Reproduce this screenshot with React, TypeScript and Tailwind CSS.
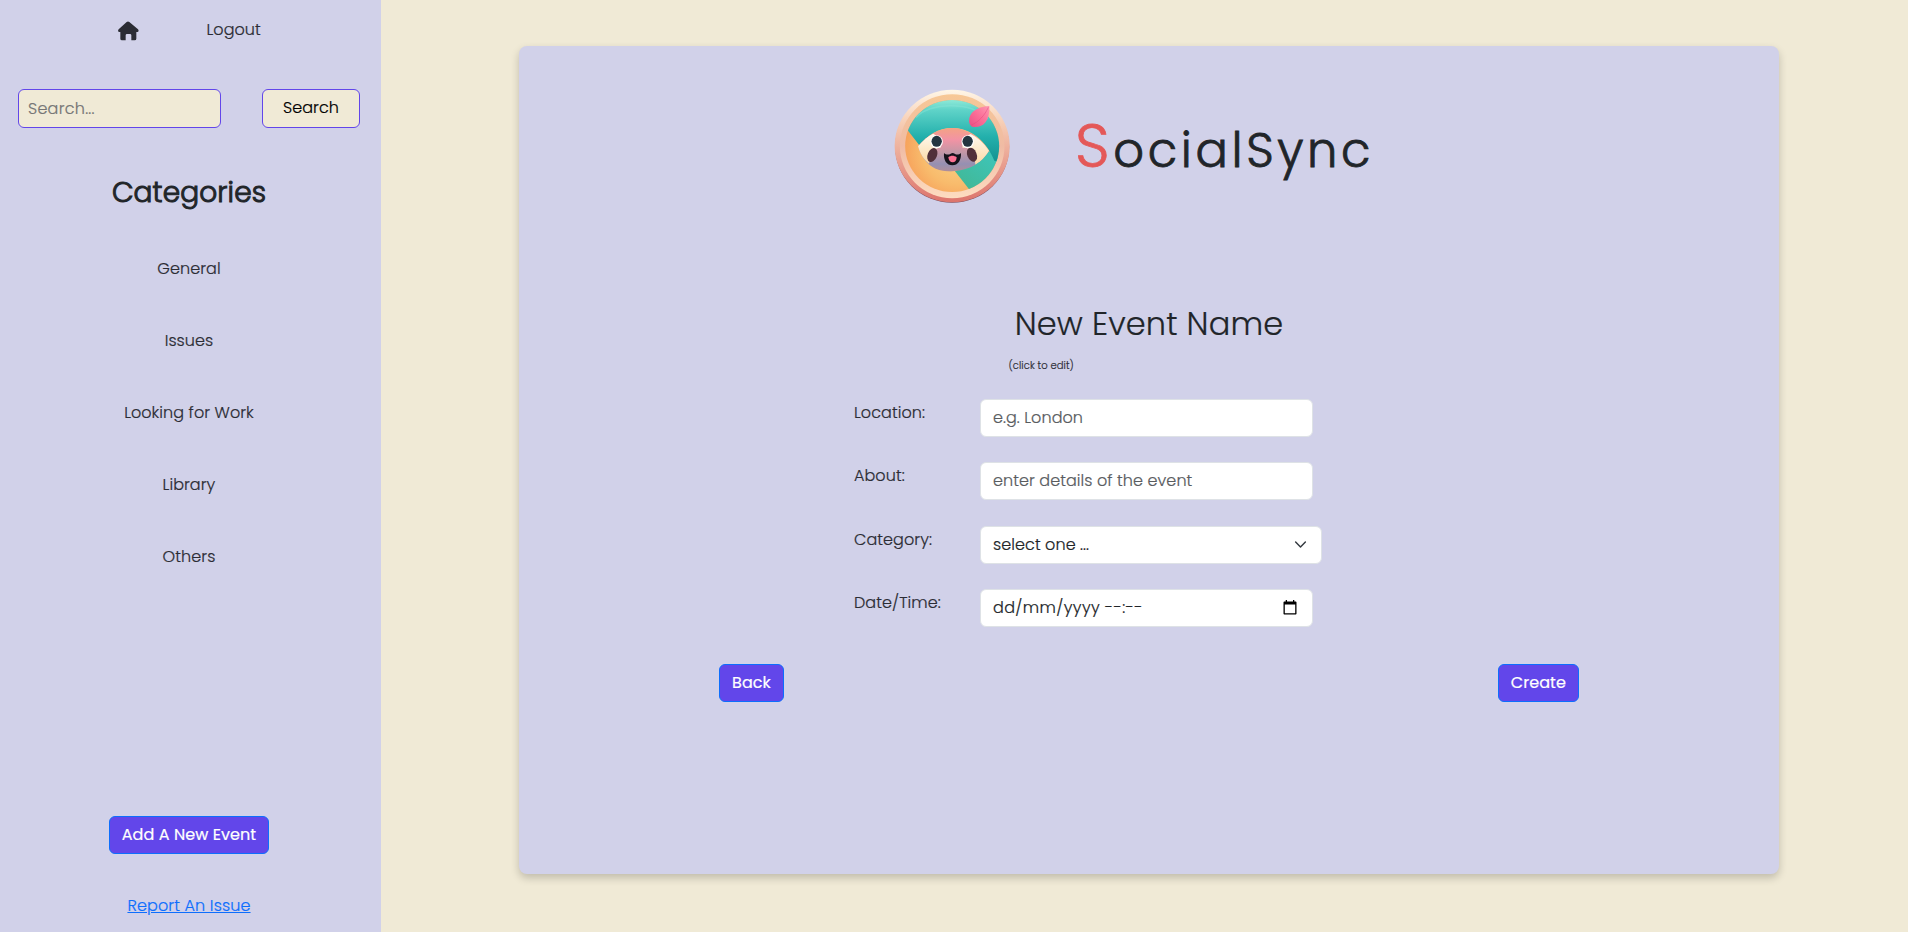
import type { ReactNode } from 'react';

const categories = ['General', 'Issues', 'Looking for Work', 'Library', 'Others'];

const fieldClass =
  'flex h-[38px] items-center justify-between rounded-md border border-[#dee2e6] bg-white px-3';

function HomeIcon() {
  return (
    <svg width="22" height="20" viewBox="350 63 66 60" className="block">
      <path
        d="M379 66q4-3 8 0L413 88q4 5-1 8h-4v20q0 5-5 5h-10V106q0-4-4-4h-9q-4 0-4 4v15h-11q-5 0-5-5V96h-4q-5-3-1-8Z"
        fill="#2b2c34"
      />
    </svg>
  );
}

function Logo() {
  return (
    <svg width="160" height="150" viewBox="0 0 480 450" className="block shrink-0">
      <defs>
        <linearGradient id="rim" x1="0" y1="0" x2="0" y2="1">
          <stop offset="0" stopColor="#fff6e6" />
          <stop offset=".3" stopColor="#f6cdb4" />
          <stop offset=".6" stopColor="#eba695" />
          <stop offset="1" stopColor="#dc746c" />
        </linearGradient>
        <linearGradient id="ring" x1="0" y1="0" x2="0" y2="1">
          <stop offset="0" stopColor="#f7c896" />
          <stop offset=".5" stopColor="#f0bba4" />
          <stop offset="1" stopColor="#fddcc0" />
        </linearGradient>
        <linearGradient id="teal" x1="0" y1="0" x2="0" y2="1">
          <stop offset="0" stopColor="#9cf0dc" />
          <stop offset=".2" stopColor="#5fd3c8" />
          <stop offset=".6" stopColor="#23b0ac" />
          <stop offset="1" stopColor="#12908f" />
        </linearGradient>
        <linearGradient id="wedge" x1="1" y1="0" x2=".2" y2="1">
          <stop offset="0" stopColor="#3cc8c0" />
          <stop offset="1" stopColor="#42b795" />
        </linearGradient>
        <radialGradient id="orange" cx=".55" cy=".55" r=".65">
          <stop offset="0" stopColor="#fbd68d" />
          <stop offset=".55" stopColor="#f8bb6c" />
          <stop offset="1" stopColor="#f69351" />
        </radialGradient>
        <linearGradient id="face" x1="0" y1="0" x2="0" y2="1">
          <stop offset="0" stopColor="#f4a481" />
          <stop offset=".28" stopColor="#f293a4" />
          <stop offset=".55" stopColor="#c397a6" />
          <stop offset=".8" stopColor="#9590b2" />
          <stop offset="1" stopColor="#b58d94" />
        </linearGradient>
        <linearGradient id="cheek" x1="0" y1="0" x2="0" y2="1">
          <stop offset="0" stopColor="#fffaf0" />
          <stop offset="1" stopColor="#fbd9a4" />
        </linearGradient>
        <linearGradient id="leaf" x1="1" y1="0" x2="0" y2="1">
          <stop offset="0" stopColor="#ff9ab2" />
          <stop offset=".5" stopColor="#fb6d97" />
          <stop offset="1" stopColor="#e94f84" />
        </linearGradient>
        <clipPath id="disc">
          <ellipse cx="246.5" cy="228" rx="141" ry="138" />
        </clipPath>
        <clipPath id="mask">
          <path d="M144 229C174 194 208 174 247 174s78 22 110 68c-14 24-35 42-64 53-32 12-68 12-96 1-26-11-44-37-53-67Z" />
        </clipPath>
      </defs>
      <ellipse cx="246.5" cy="230.5" rx="171" ry="168" fill="#7c5060" />
      <ellipse cx="246.5" cy="228" rx="172.5" ry="168.5" fill="url(#rim)" />
      <ellipse cx="246.5" cy="228.5" rx="157" ry="156" fill="url(#ring)" />
      <g clipPath="url(#disc)">
        <rect x="100" y="85" width="295" height="285" fill="url(#orange)" />
        <path d="M255 304 372 236l30 60-100 68Z" fill="url(#wedge)" />
        <path
          d="M148 226 105 170V80h290v200l-22-8c-24-60-72-98-126-98-44 0-74 22-99 52Z"
          fill="url(#teal)"
        />
        <path d="M138 142c40-44 162-50 216 4" fill="none" stroke="#8be6da" strokeWidth="5" opacity=".4" />
      </g>
      <g clipPath="url(#mask)">
        <rect x="140" y="170" width="220" height="140" fill="url(#face)" />
        <path
          d="M140 229c18-22 34-32 50-38 14 8 24 20 22 42-20 0-30 18-35 48-20-14-31-32-37-52Z"
          fill="url(#cheek)"
        />
        <path
          d="M358 240c-16-22-36-38-56-48-18 8-28 22-24 42 22-4 36 14 38 50 20-10 34-24 42-44Z"
          fill="url(#cheek)"
        />
      </g>
      <ellipse cx="187" cy="255" rx="14" ry="22" fill="#51303a" transform="rotate(22 187 255)" />
      <ellipse cx="306" cy="254" rx="14" ry="22" fill="#51303a" transform="rotate(-22 306 254)" />
      <ellipse cx="200" cy="215" rx="18.5" ry="19.5" fill="#fff" />
      <ellipse cx="293" cy="215" rx="18.5" ry="19.5" fill="#fff" />
      <ellipse cx="200" cy="214" rx="15.5" ry="16.5" fill="#243540" />
      <ellipse cx="293" cy="214" rx="15.5" ry="16.5" fill="#243540" />
      <path
        d="M222 249c6 6 14 6 20 2 4-3 8-3 12 0 6 4 12 4 19-2 1 22-9 37-26 37s-27-15-25-37Z"
        fill="#15131b"
      />
      <path d="M235 262c7-6 17-6 25 0 0 9-5 15-12 15s-12-6-13-15Z" fill="#fb7193" />
      <path d="M357 108c-38 3-60 20-60 45 0 6 3 13 9 17 30 5 54-12 52-62Z" fill="url(#leaf)" />
      <path d="M355 112c-11 24-28 43-52 54" fill="none" stroke="#e4457c" strokeWidth="2" opacity=".7" />
    </svg>
  );
}

function CalendarIcon() {
  return (
    <svg width="14" height="15" viewBox="0 0 14 15" className="mr-[3px] block">
      <path
        d="M2.7 0H4v1.500h6V0h1.300v1.500h1c.8 0 1.200.4 1.200 1v11c0 .6-.4 1-1.200 1H1.700c-.8 0-1.200-.4-1.200-1v-11c0-.6.4-1 1.200-1h1Zm-.9 4.500v8.700h10.400V4.500Z"
        fill="#000"
      />
    </svg>
  );
}

function ChevronIcon() {
  return (
    <svg width="13" height="13" viewBox="0 0 16 16" className="mr-[1.5px] block">
      <path d="m2 5 6 6 6-6" fill="none" stroke="#343a40" strokeWidth="1.800" strokeLinecap="round" strokeLinejoin="round" />
    </svg>
  );
}

function FormRow({ label, children }: { label: string; children: ReactNode }) {
  return (
    <div className="flex h-[38px] items-start">
      <label className="w-[126px] shrink-0 pt-0.5">{label}</label>
      {children}
    </div>
  );
}

function PrimaryButton({ children }: { children: ReactNode }) {
  return (
    <button className="h-[38px] rounded-md border border-[#0d6efd] bg-[#6246ea] px-3 font-normal text-[#fffffe]">
      {children}
    </button>
  );
}

export default function App() {
  return (
    <div className="flex h-[932px] bg-[#f0ead6] font-[Poppins,Inter,sans-serif] text-base leading-6 font-light tracking-[0.07px] text-[#2b2c34] [-webkit-text-stroke:0.2px_currentColor]">
      <aside className="flex w-[381px] shrink-0 flex-col bg-[#d1d1e9]">
        <nav className="flex items-start pt-[18px] pl-[116.5px]">
          <div className="pt-[3px]">
            <HomeIcon />
          </div>
          <a className="ml-[68px]">Logout</a>
        </nav>
        <div className="mt-[47px] flex justify-between pr-[21px] pl-[18px]">
          <input
            type="text"
            placeholder="Search..."
            className="h-[39px] w-[203px] rounded-md border border-[#6246ea] bg-[#f0ead6] px-[9px] tracking-[0.25px] placeholder:text-[#757575]"
          />
          <button className="h-[39px] w-[98px] rounded-md border border-[#6246ea] bg-[#f0ead6] pb-px text-black">
            Search
          </button>
        </div>
        <div className="flex grow flex-col items-center pr-[3px]">
          <h3 className="mt-12 text-[28px] leading-[34px] tracking-[0.12px] text-[#212529] [-webkit-text-stroke:1px_#212529]">
            Categories
          </h3>
          <ul className="mt-[47px] flex flex-col gap-12 text-center">
            {categories.map((name) => (
              <li key={name}>{name}</li>
            ))}
          </ul>
          <div className="mt-auto">
            <PrimaryButton>Add A New Event</PrimaryButton>
          </div>
          <a className="mt-10 mb-[14px] tracking-[0.12px] text-[#0d6efd] underline">Report An Issue</a>
        </div>
      </aside>

      <main className="grow pt-[46px] pl-[138px]">
        <section className="flex h-[828px] w-[1260px] flex-col rounded-lg bg-[#d1d1e9] shadow-[0_4px_8px_rgba(0,0,0,0.2)]">
          <header className="flex h-[174px] pt-6 pl-[351px]">
            <Logo />
            <h1 className="mt-10 ml-[45px] text-[48px] leading-[72px] tracking-[3.65px] text-[#212529] [-webkit-text-stroke:0.8px_#212529]">
              <span className="text-[60.5px] text-[#e45858] [-webkit-text-stroke:0.8px_#e45858]">S</span>ocialSync
            </h1>
          </header>
          <div className="flex flex-col text-[#212529]">
            <h2 className="mt-[85px] text-center text-[32px] leading-[38px] tracking-[0.12px]">New Event Name</h2>
            <small className="mt-[15px] ml-[489.5px] text-[10px] leading-[15px] text-[#2b2c34]">(click to edit)</small>
          </div>
          <form className="mt-[26px] ml-[335px] flex w-[470px] flex-col gap-[25.3px]">
            <FormRow label="Location:">
              <div className={`${fieldClass} w-[332.5px] text-[#595c5f]`}>e.g. London</div>
            </FormRow>
            <FormRow label="About:">
              <div className={`${fieldClass} w-[332.5px] text-[#595c5f]`}>enter details of the event</div>
            </FormRow>
            <FormRow label="Category:">
              <div className={`${fieldClass} w-[341.5px] text-[#212529]`}>
                select one ...
                <ChevronIcon />
              </div>
            </FormRow>
            <FormRow label="Date/Time:">
              <div className={`${fieldClass} w-[332.5px] tracking-[0.38px] text-[#212529]`}>
                dd/mm/yyyy --:--
                <CalendarIcon />
              </div>
            </FormRow>
          </form>
          <div className="mt-[37px] flex justify-between pr-[200px] pl-[200px]">
            <PrimaryButton>Back</PrimaryButton>
            <PrimaryButton>Create</PrimaryButton>
          </div>
        </section>
      </main>
    </div>
  );
}
